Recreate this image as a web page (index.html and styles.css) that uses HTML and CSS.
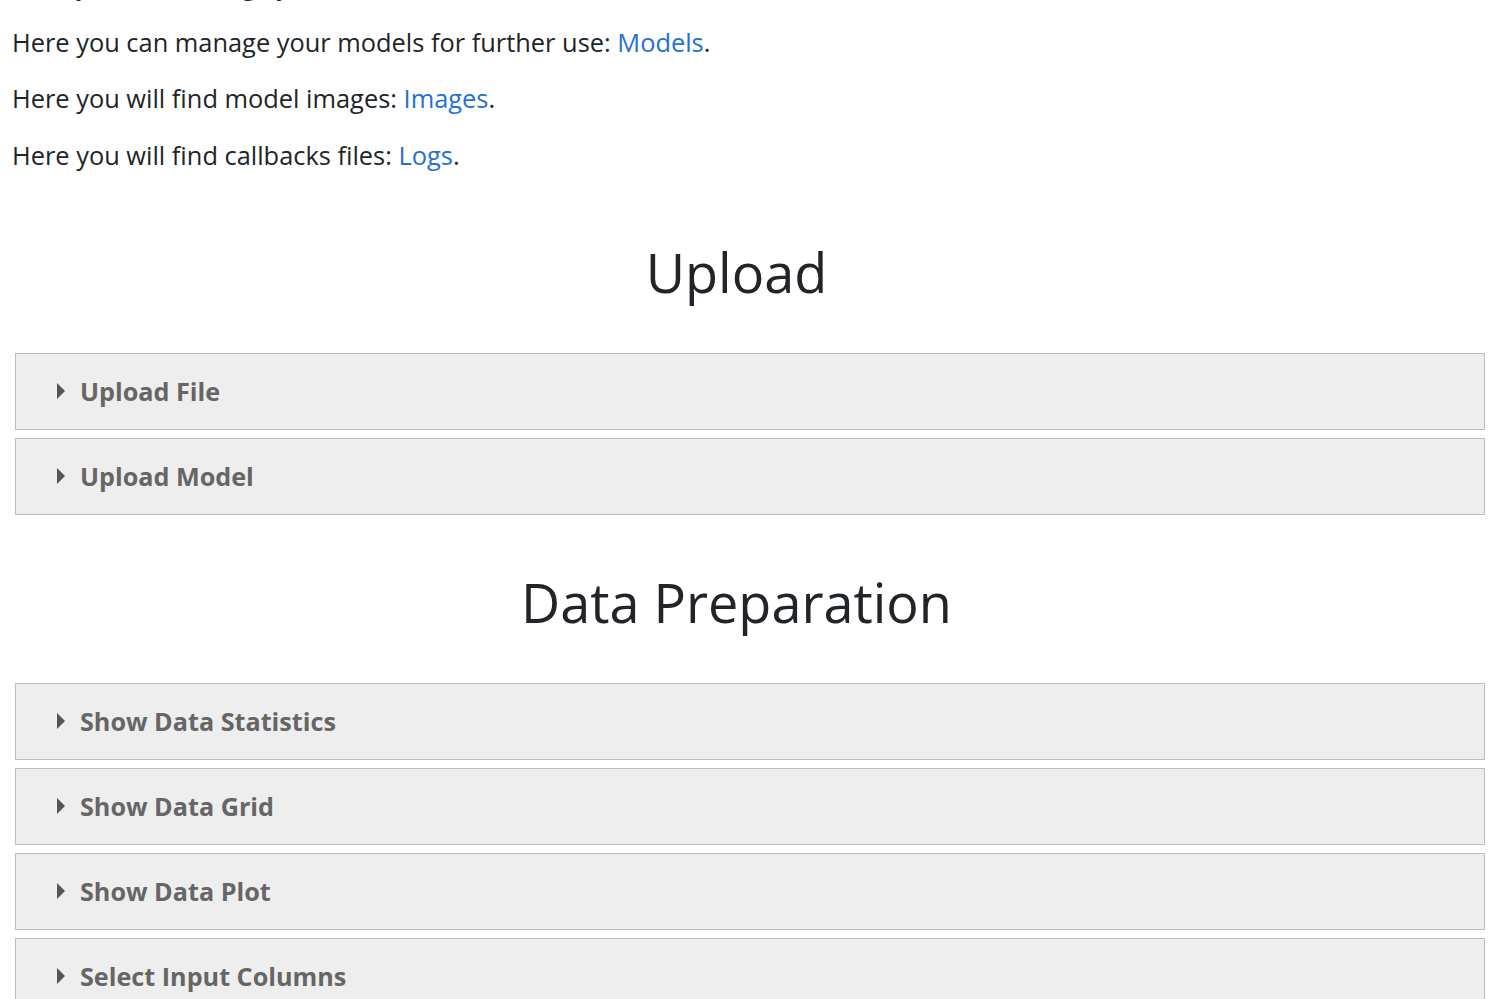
FILE: index.html
```html
<!DOCTYPE html>
<html lang="en">
<head>
<meta charset="utf-8">
<title>Model Manager</title>
<link rel="stylesheet" href="styles.css">
</head>
<body>
<main class="page">
  <section class="intro">
    <p class="line cut">Here you can manage your datasets: <a href="#">Data</a>.</p>
    <p class="line">Here you can manage your models for further use: <a href="#">Models</a>.</p>
    <p class="line">Here you will find model images: <a href="#">Images</a>.</p>
    <p class="line">Here you will find callbacks files: <a href="#">Logs</a>.</p>
  </section>

  <h1 class="section-title title-upload">Upload</h1>
  <div class="panels">
    <details class="panel"><summary><span class="tri"></span>Upload File</summary></details>
    <details class="panel"><summary><span class="tri"></span>Upload Model</summary></details>
  </div>

  <h1 class="section-title title-prep">Data Preparation</h1>
  <div class="panels">
    <details class="panel"><summary><span class="tri"></span>Show Data Statistics</summary></details>
    <details class="panel"><summary><span class="tri"></span>Show Data Grid</summary></details>
    <details class="panel"><summary><span class="tri"></span>Show Data Plot</summary></details>
    <details class="panel"><summary><span class="tri"></span>Select Input Columns</summary></details>
  </div>
</main>
</body>
</html>
```

FILE: styles.css
```css
html, body {
  margin: 0;
  padding: 0;
  background: #fff;
}
body {
  font-family: "Open Sans", "Noto Sans", "Liberation Sans", sans-serif;
  color: #212529;
  overflow: hidden;
  height: 999px;
}
.page {
  padding: 0 15px 0 12px;
}
.intro {
  display: flex;
  flex-direction: column;
  gap: 14.5px;
  margin-top: -36px;
}
.line {
  margin: 0;
  font-size: 25.4px;
  line-height: 42px;
}
.line a {
  color: #2470d6;
  text-decoration: none;
}
.section-title {
  margin: 0;
  font-weight: 500;
  text-align: center;
  padding-right: 24px;
  font-size: 54px;
  line-height: 64px;
  color: #212529;
}
.title-upload {
  margin-top: 64px;
  margin-bottom: 49px;
}
.title-prep {
  margin-top: 55px;
  margin-bottom: 49px;
}
.panels {
  display: flex;
  flex-direction: column;
  gap: 8px;
  margin-left: 3px;
}
.panel {
  background: #eeeeee;
  border: 1px solid #bdbdbd;
}
.panel summary {
  list-style: none;
  display: flex;
  align-items: center;
  height: 75px;
  padding-left: 41px;
  font-size: 25.2px;
  font-weight: 700;
  color: #666666;
  cursor: pointer;
}
.panel summary::-webkit-details-marker {
  display: none;
}
.tri {
  width: 0;
  height: 0;
  border-top: 8px solid transparent;
  border-bottom: 8px solid transparent;
  border-left: 8px solid #555;
  margin-right: 15px;
}
```
